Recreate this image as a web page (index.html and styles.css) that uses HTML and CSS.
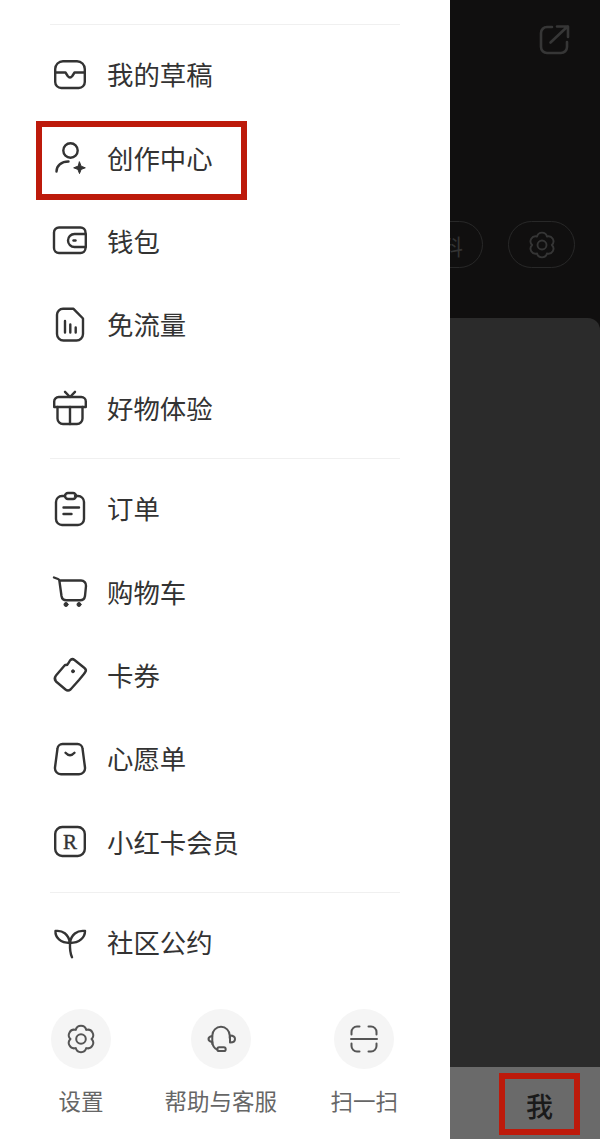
FILE: index.html
```html
<!DOCTYPE html>
<html lang="zh-CN">
<head>
    <meta charset="UTF-8">
    <meta name="viewport" content="width=device-width, initial-scale=1.0">
    <title>我</title>
    <link rel="stylesheet" href="styles.css">
</head>
<body>
    <div class="app">
        <aside class="drawer">
            <div class="menu-group">
                <div class="menu-row">
                    <svg class="icon" viewBox="0 0 40 40"><path d="M13 6.200H27a7.800 7.800 0 0 1 7.800 7.800V27a6 6 0 0 1-6 6H11.200a6 6 0 0 1-6-6V14a7.800 7.800 0 0 1 7.800-7.800z"/><path d="M5.200 17.500H15.500l2.200 3.500q2.300 3 4.600 0l2.200-3.500H34.800"/></svg>
                    <span class="menu-text">我的草稿</span>
                </div>
                <div class="menu-row">
                    <svg class="icon" viewBox="0 0 40 40"><circle cx="20.500" cy="12.500" r="7.200"/><path d="M6.500 33.500c0-6 5-10 12-10"/><path class="solid" d="M29.500 24l1.600 4.200 4.200 1.600-4.200 1.600-1.600 4.200-1.600-4.200-4.200-1.600 4.200-1.600z"/></svg>
                    <span class="menu-text">创作中心</span>
                    <div class="mark mark-row"></div>
                </div>
                <div class="menu-row">
                    <svg class="icon" viewBox="0 0 40 40"><path d="M35.500 12V11.500a5 5 0 0 0-5-5H9a5 5 0 0 0-5 5V27a5 5 0 0 0 5 5h21.500a5 5 0 0 0 5-5V26.500"/><path d="M35.800 13H24.500a6.500 6.500 0 0 0 0 13H35.800z"/><path d="M23.500 19.500h2"/></svg>
                    <span class="menu-text">钱包</span>
                </div>
                <div class="menu-row">
                    <svg class="icon" viewBox="0 0 40 40"><path d="M13 3.800H23.500L33 13.500V29a6.500 6.500 0 0 1-6.500 6.500h-13A6.500 6.500 0 0 1 7 29V9.800a6 6 0 0 1 6-6z"/><path d="M15 16v11.500M20.300 19.500v8M25.700 22.500v5"/></svg>
                    <span class="menu-text">免流量</span>
                </div>
                <div class="menu-row">
                    <svg class="icon" viewBox="0 0 40 40"><path d="M4.200 19V13.500a4.500 4.500 0 0 1 4.500-4.500h22.600a4.500 4.500 0 0 1 4.500 4.500V19z"/><path d="M7.500 19V30.500a5.500 5.500 0 0 0 5.500 5.500h14a5.500 5.500 0 0 0 5.500-5.500V19"/><path d="M20 19v17M15 3.800L20 9l5-5.200"/></svg>
                    <span class="menu-text">好物体验</span>
                </div>
            </div>
            <div class="menu-group">
                <div class="menu-row">
                    <svg class="icon" viewBox="0 0 40 40"><path d="M15 7H12a6 6 0 0 0-6 6V30a6 6 0 0 0 6 6H28a6 6 0 0 0 6-6V13a6 6 0 0 0-6-6H25"/><rect x="15" y="4" width="11" height="6" rx="3"/><path d="M13.500 18.500h15.500M13.500 25h8"/></svg>
                    <span class="menu-text">订单</span>
                </div>
                <div class="menu-row">
                    <svg class="icon" viewBox="0 0 40 40"><path d="M4 5.500L8 7c.8.3 1.300 1 1.400 1.800L11.500 24a5 5 0 0 0 5 4.200H30a5 5 0 0 0 5-4.200L36 14a5 5 0 0 0-5-5.500H9.500"/><circle class="solid" cx="16" cy="32.500" r="2"/><circle class="solid" cx="29" cy="32.500" r="2"/></svg>
                    <span class="menu-text">购物车</span>
                </div>
                <div class="menu-row">
                    <svg class="icon" viewBox="0 0 40 40"><path d="M6 20.500L15 10Q17.500 10.500 18.500 8L20 5.500Q22 3 24.500 5L34.500 13Q37 15 35 17.500L33.500 19.500Q31.500 22 29 25L20.500 34.500Q18 36.500 15.500 34.500L6 26.500Q3.500 23.500 6 20.500z"/><circle class="solid" cx="23" cy="16.300" r="1.500"/></svg>
                    <span class="menu-text">卡券</span>
                </div>
                <div class="menu-row">
                    <svg class="icon" viewBox="0 0 40 40"><path d="M12.500 5H27.500a5 5 0 0 1 5 4.500L35 28.500a6 6 0 0 1-6 6.700H11a6 6 0 0 1-6-6.700L7.500 9.500a5 5 0 0 1 5-4.500z"/><path d="M15.500 13.800q4.500 5 9 0"/></svg>
                    <span class="menu-text">心愿单</span>
                </div>
                <div class="menu-row">
                    <svg class="icon" viewBox="0 0 40 40"><rect x="5.200" y="5" width="29.600" height="29" rx="7"/><text class="icon-letter" x="20" y="26.500" text-anchor="middle">R</text></svg>
                    <span class="menu-text">小红卡会员</span>
                </div>
            </div>
            <div class="menu-group">
                <div class="menu-row">
                    <svg class="icon" viewBox="0 0 40 40"><path d="M20 20C18.500 11 12.500 7 5.500 8C5 14.500 10.500 20 20 20z"/><path d="M20 20C21 11.500 27 7 35 8C35 14.500 29.500 20 20 20z"/><path d="M20 20C19.800 25.500 20 30 22 34.200"/></svg>
                    <span class="menu-text">社区公约</span>
                </div>
            </div>
            <div class="shortcuts">
                <div class="shortcut">
                    <div class="shortcut-circle">
                        <svg class="icon-small" viewBox="-16 -16 32 32"><path d="M5.250-9.090A5.400 5.400 0 0 1 10.500 0A5.400 5.400 0 0 1 5.250 9.090A5.400 5.400 0 0 1-5.250 9.090A5.400 5.400 0 0 1-10.500 0A5.400 5.400 0 0 1-5.250-9.090A5.400 5.400 0 0 1 5.250-9.090z"/><circle r="4.800"/></svg>
                    </div>
                    <span class="shortcut-label">设置</span>
                </div>
                <div class="shortcut">
                    <div class="shortcut-circle">
                        <svg class="icon-small" viewBox="-16 -16 32 32"><path d="M-8.700 5V-3.500a8.700 8.700 0 0 1 17.400 0V-1"/><path d="M9-3.500c3 0 5 1.300 5 3.500S12 3.500 9 3.500z"/><path d="M-8.700-3c-2.500.5-3.800 1.500-3.800 3s1.300 2.500 3.800 3"/><path d="M-8.700 3c.3 4 2 6.500 5 7.500"/><rect x="-3.700" y="8.300" width="8.400" height="3.800" rx="1.900"/></svg>
                    </div>
                    <span class="shortcut-label">帮助与客服</span>
                </div>
                <div class="shortcut">
                    <div class="shortcut-circle">
                        <svg class="icon-small" viewBox="-16 -16 32 32"><path d="M-12.500-4.500V-7a5.500 5.500 0 0 1 5.500-5.500h2.500M12.500-4.500V-7a5.500 5.500 0 0 0-5.500-5.500H4.500M-12.500 4.500V7a5.500 5.500 0 0 0 5.500 5.500h2.500M12.500 4.500V7a5.500 5.500 0 0 1-5.500 5.500H4.500M-13 0H13"/></svg>
                    </div>
                    <span class="shortcut-label">扫一扫</span>
                </div>
            </div>
        </aside>

        <main class="profile">
            <div class="profile-top">
                <svg class="share" viewBox="0 0 32 32"><path d="M13 4H8A6 6 0 0 0 2 10V24a6 6 0 0 0 6 6H22a6 6 0 0 0 6-6V19"/><path d="M11.500 19.500L28.500 3.500M18 3.500H29V14"/></svg>
                <div class="pills">
                    <div class="pill pill-text">编辑资料</div>
                    <div class="pill pill-gear">
                        <svg class="gear" viewBox="-16 -16 32 32"><path d="M5.250-9.090A5.400 5.400 0 0 1 10.500 0A5.400 5.400 0 0 1 5.250 9.090A5.400 5.400 0 0 1-5.250 9.090A5.400 5.400 0 0 1-10.500 0A5.400 5.400 0 0 1-5.250-9.090A5.400 5.400 0 0 1 5.250-9.090z"/><circle r="4.800"/></svg>
                    </div>
                </div>
            </div>
            <div class="profile-card"></div>
            <div class="tabbar">
                <div class="tab">我<div class="mark mark-tab"></div></div>
            </div>
        </main>
    </div>
</body>
</html>
```

FILE: styles.css
```css
* {
    box-sizing: border-box;
}
body {
    margin: 0;
    font-family: "Noto Sans CJK SC", "Noto Sans", sans-serif;
    background-color: #fff;
}
.app {
    display: flex;
    width: 600px;
    height: 1139px;
    overflow: hidden;
}
.drawer {
    position: relative;
    z-index: 1;
    flex: 0 0 450px;
    padding-top: 24px;
    background-color: #fff;
}
.menu-group {
    margin: 0 50px;
    padding: 8px 0;
    border-top: 1px solid #f0f0f0;
}
.menu-row {
    position: relative;
    display: flex;
    align-items: center;
    gap: 17px;
    height: 83.4px;
    font-size: 26.4px;
    color: #333;
}
.menu-text {
    margin-bottom: 2px;
}
.icon {
    flex: none;
    width: 40px;
    height: 40px;
    fill: none;
    stroke: #333;
    stroke-width: 2.4;
    stroke-linecap: round;
    stroke-linejoin: round;
}
.icon .solid {
    fill: #333;
    stroke-width: 1;
}
.icon-letter {
    font-family: "Liberation Serif", serif;
    font-size: 21px;
    fill: #333;
    stroke: #333;
    stroke-width: 0.4;
}
.mark {
    position: absolute;
    border: 6px solid #bd1a0b;
}
.mark-row {
    left: -14px;
    top: 4.5px;
    width: 211px;
    height: 79px;
}
.mark-tab {
    left: -27px;
    top: -14px;
    width: 81px;
    height: 62px;
}
.shortcuts {
    display: flex;
    justify-content: space-between;
    margin-top: 17px;
    padding: 0 52px 0 51px;
}
.shortcut {
    display: flex;
    flex-direction: column;
    align-items: center;
    gap: 15px;
}
.shortcut-circle {
    display: flex;
    align-items: center;
    justify-content: center;
    width: 60px;
    height: 60px;
    border-radius: 50%;
    background-color: #f5f5f5;
}
.icon-small {
    width: 32px;
    height: 32px;
    fill: none;
    stroke: #555;
    stroke-width: 2;
    stroke-linecap: round;
    stroke-linejoin: round;
}
.shortcut-label {
    font-size: 22.5px;
    line-height: 33px;
    color: #666;
    white-space: nowrap;
}
.profile {
    display: flex;
    flex: 1;
    flex-direction: column;
    min-width: 0;
    background-color: #100f0f;
}
.profile-top {
    display: flex;
    flex: 0 0 318px;
    flex-direction: column;
    align-items: flex-end;
}
.share {
    width: 32px;
    height: 32px;
    margin: 23px 29px 0 0;
    fill: none;
    stroke: #363636;
    stroke-width: 2.6;
    stroke-linecap: round;
    stroke-linejoin: round;
}
.pills {
    display: flex;
    gap: 25px;
    margin: 166px 25px 0 0;
}
.pill {
    display: flex;
    align-items: center;
    height: 47px;
    border: 1px solid #282828;
    border-radius: 24px;
}
.pill-text {
    flex: none;
    justify-content: flex-end;
    width: 130px;
    padding-right: 19px;
    font-size: 22px;
    color: #333;
    white-space: nowrap;
}
.pill-gear {
    justify-content: center;
    width: 67px;
}
.gear {
    width: 30px;
    height: 30px;
    fill: none;
    stroke: #353535;
    stroke-width: 2;
    stroke-linejoin: round;
}
.profile-card {
    flex: 1;
    border-radius: 0 12px 0 0;
    background-color: #2b2b2b;
}
.tabbar {
    display: flex;
    flex: 0 0 72px;
    justify-content: flex-end;
    padding: 20px 47px 0 0;
    background-color: #6a6a6a;
}
.tab {
    position: relative;
    font-size: 27px;
    font-weight: 500;
    line-height: 38px;
    color: #1a1a1a;
}
```
